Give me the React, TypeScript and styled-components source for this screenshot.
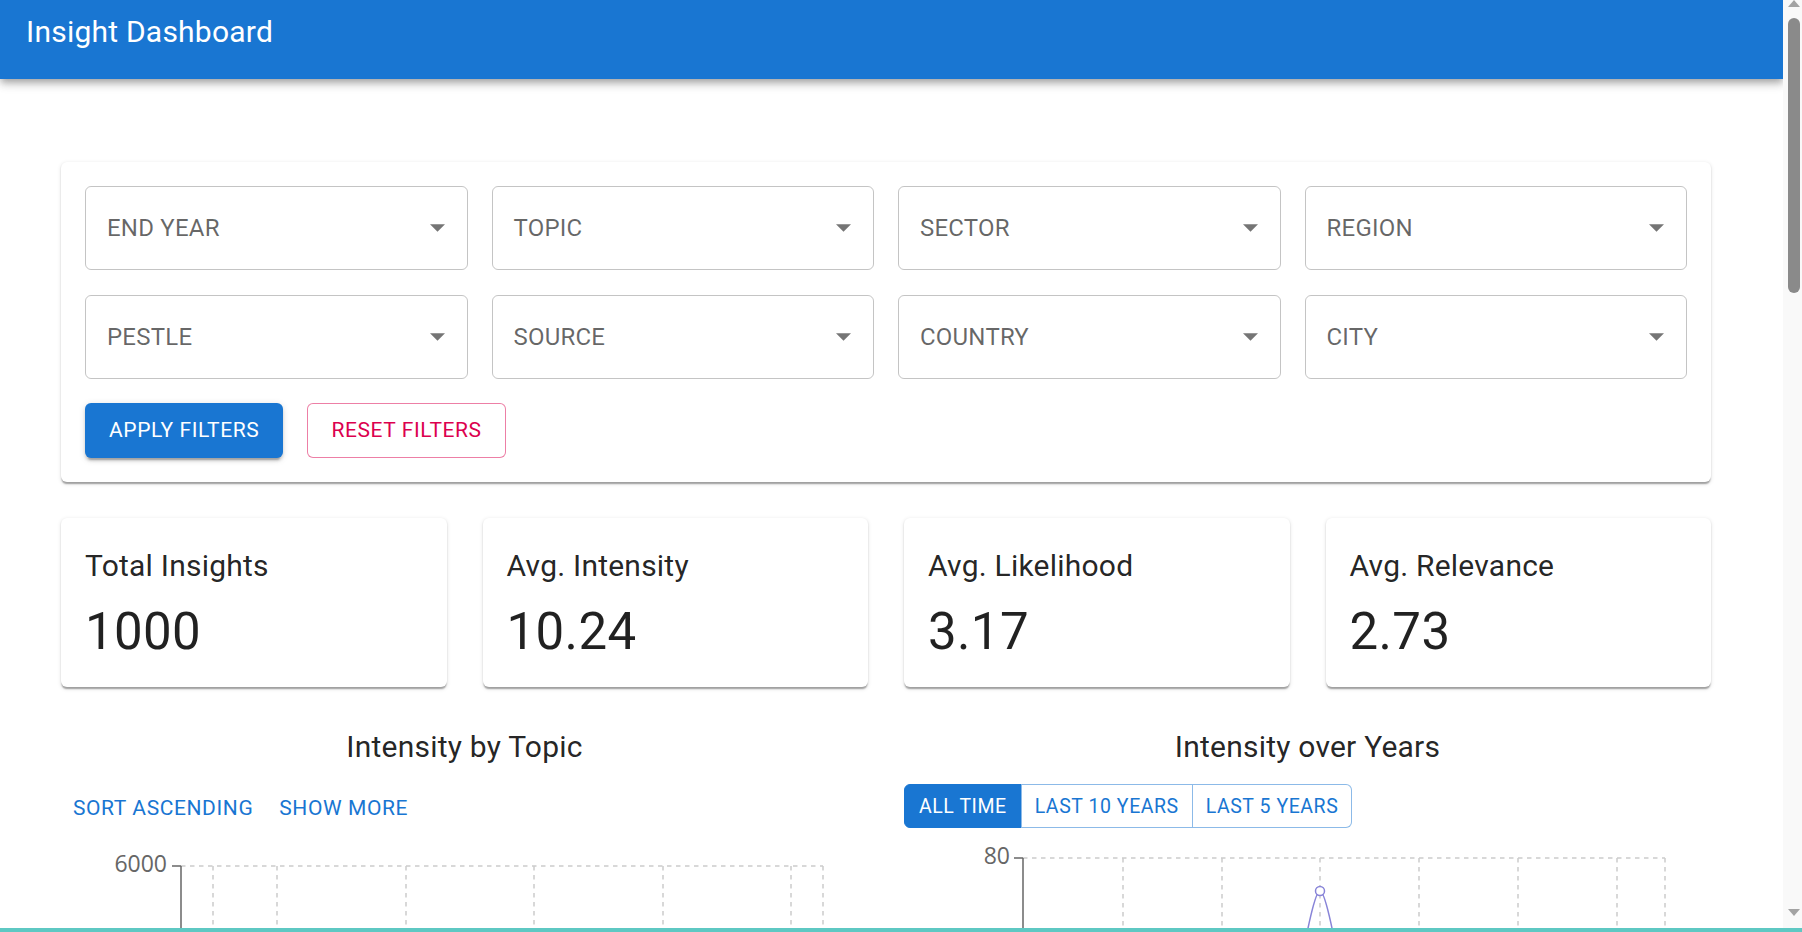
import React from "react";
import styled, { createGlobalStyle } from "styled-components";

const GlobalStyle = createGlobalStyle`
  html, body {
    margin: 0;
    padding: 0;
    height: 100%;
    overflow: hidden;
  }
  body {
    font-family: Roboto, "Liberation Sans", Arial, sans-serif;
    color: rgba(0, 0, 0, 0.87);
    background: #fff;
  }
  #root {
    height: 100%;
  }
  * {
    box-sizing: border-box;
  }
`;

const filters = [
  "END YEAR",
  "TOPIC",
  "SECTOR",
  "REGION",
  "PESTLE",
  "SOURCE",
  "COUNTRY",
  "CITY",
];

const stats = [
  { label: "Total Insights", value: "1000" },
  { label: "Avg. Intensity", value: "10.24" },
  { label: "Avg. Likelihood", value: "3.17" },
  { label: "Avg. Relevance", value: "2.73" },
];

const topicBars = [2100, 1650, 1320, 980, 760, 540, 410];
const ranges = ["ALL TIME", "LAST 10 YEARS", "LAST 5 YEARS"];

const ArrowDown = () => (
  <svg width="15" height="8" viewBox="0 0 10 5">
    <path d="M0 0l5 5 5-5z" fill="rgba(0,0,0,0.54)" />
  </svg>
);

const TopicChart = () => {
  const vLines = [152, 216, 345, 473, 602, 730, 762];
  const hLines = [30, 130, 230, 330, 430];
  const labels = ["6000", "4500", "3000", "1500", "0"];
  return (
    <ChartSvg viewBox="0 0 807 520" height={520}>
      {hLines.map((y) => (
        <GridLine key={y} x1={120} x2={762} y1={y} y2={y} />
      ))}
      {vLines.map((x) => (
        <GridLine key={x} x1={x} x2={x} y1={30} y2={430} />
      ))}
      {topicBars.map((v, i) => {
        const h = (v / 6000) * 400;
        const x = 130 + i * 90;
        return <rect key={i} x={x} y={430 - h} width={60} height={h} fill="#8884d8" />;
      })}
      <AxisLine x1={120} x2={120} y1={30} y2={430} />
      <AxisLine x1={120} x2={762} y1={430} y2={430} />
      {hLines.map((y, i) => (
        <g key={y}>
          <AxisLine x1={111} x2={120} y1={y} y2={y} />
          <TickText x={106} y={y} textAnchor="end" dominantBaseline="middle">
            {labels[i]}
          </TickText>
        </g>
      ))}
    </ChartSvg>
  );
};

const YearChart = () => {
  const vLines = [219, 318, 416, 515, 614, 713, 761];
  const hLines = [30, 130, 230, 330, 430];
  const labels = ["80", "60", "40", "20", "0"];
  return (
    <ChartSvg viewBox="0 0 807 520" height={520}>
      {hLines.map((y) => (
        <GridLine key={y} x1={119} x2={761} y1={y} y2={y} />
      ))}
      {vLines.map((x) => (
        <GridLine key={x} x1={x} x2={x} y1={30} y2={430} />
      ))}
      <path
        d="M119 380 C 180 380, 250 360, 318 372 C 350 378, 372 340, 380 320 L 390 170 C 400 120, 410 63, 416 63 C 422 63, 432 120, 442 170 L 452 320 C 480 340, 560 390, 614 385 C 660 380, 720 405, 761 400"
        fill="none"
        stroke="#8884d8"
        strokeWidth={1.5}
      />
      <circle cx={416} cy={63} r={4.5} fill="#fff" stroke="#8884d8" strokeWidth={1.5} />
      <AxisLine x1={119} x2={119} y1={30} y2={430} />
      <AxisLine x1={119} x2={761} y1={430} y2={430} />
      {hLines.map((y, i) => (
        <g key={y}>
          <AxisLine x1={110} x2={119} y1={y} y2={y} />
          <TickText x={106} y={y} textAnchor="end" dominantBaseline="middle">
            {labels[i]}
          </TickText>
        </g>
      ))}
    </ChartSvg>
  );
};

const App = () => {
  return (
    <Frame>
      <GlobalStyle />
      <Window>
        <Page>
          <AppBar>
            <AppTitle>Insight Dashboard</AppTitle>
          </AppBar>
          <Main>
            <Paper $pad={24} $mb={36}>
              <FilterGrid>
                {filters.map((f) => (
                  <SelectBox key={f}>
                    <span>{f}</span>
                    <ArrowDown />
                  </SelectBox>
                ))}
              </FilterGrid>
              <ButtonRow>
                <Button $variant="contained">Apply Filters</Button>
                <Button $variant="outlined">Reset Filters</Button>
              </ButtonRow>
            </Paper>

            <StatGrid>
              {stats.map((s) => (
                <Paper key={s.label} $pad={24}>
                  <StatLabel>{s.label}</StatLabel>
                  <StatValue>{s.value}</StatValue>
                </Paper>
              ))}
            </StatGrid>

            <ChartGrid>
              <ChartPanel>
                <ChartTitle>Intensity by Topic</ChartTitle>
                <Controls $height={55}>
                  <Button $variant="text">Sort Ascending</Button>
                  <Button $variant="text">Show More</Button>
                </Controls>
                <TopicChart />
              </ChartPanel>
              <ChartPanel>
                <ChartTitle>Intensity over Years</ChartTitle>
                <Controls $height={47} $top={3}>
                  <ToggleGroup>
                    {ranges.map((r, i) => (
                      <ToggleButton key={r} $active={i === 0}>
                        {r}
                      </ToggleButton>
                    ))}
                  </ToggleGroup>
                </Controls>
                <YearChart />
              </ChartPanel>
            </ChartGrid>
          </Main>
        </Page>
        <ScrollRail>
          <RailArrow viewBox="0 0 12 7">
            <path d="M0 7L6 0l6 7z" fill="#a3a3a3" />
          </RailArrow>
          <RailThumb />
          <RailSpacer />
          <RailArrow viewBox="0 0 12 7">
            <path d="M0 0l6 7 6-7z" fill="#a3a3a3" />
          </RailArrow>
        </ScrollRail>
      </Window>
      <BottomEdge />
    </Frame>
  );
};

const Frame = styled.div`
  display: flex;
  flex-direction: column;
  height: 100vh;
`;

const Window = styled.div`
  flex: 1;
  display: flex;
  min-height: 0;
`;

const Page = styled.div`
  flex: 1;
  min-width: 0;
  overflow: hidden;
  background: #fff;
`;

const AppBar = styled.header`
  position: relative;
  z-index: 1;
  height: 79px;
  padding: 8px 26px 0;
  background: #1976d2;
  color: #fff;
  box-shadow: 0 3px 6px -1.5px rgba(0, 0, 0, 0.2), 0 6px 7.5px 0 rgba(0, 0, 0, 0.14),
    0 1.5px 15px 0 rgba(0, 0, 0, 0.12);
`;

const AppTitle = styled.h1`
  margin: 0;
  font-size: 30px;
  font-weight: 400;
  line-height: 48px;
  letter-spacing: 0.0075em;
`;

const Main = styled.main`
  padding: 83px 72px 120px 61px;
`;

const Paper = styled.div<{ $pad: number; $mb?: number }>`
  background: #fff;
  border-radius: 6px;
  padding: ${(p) => p.$pad}px;
  margin-bottom: ${(p) => p.$mb || 0}px;
  box-shadow: 0 3px 1.5px -1.5px rgba(0, 0, 0, 0.2), 0 1.5px 1.5px 0 rgba(0, 0, 0, 0.14),
    0 1.5px 4.5px 0 rgba(0, 0, 0, 0.12);
`;

const FilterGrid = styled.div`
  display: grid;
  grid-template-columns: repeat(4, 1fr);
  column-gap: 24px;
  row-gap: 25px;
`;

const SelectBox = styled.div`
  height: 84px;
  display: flex;
  align-items: center;
  justify-content: space-between;
  padding: 0 22px 0 21px;
  border: 1px solid rgba(0, 0, 0, 0.23);
  border-radius: 6px;
  font-size: 24px;
  letter-spacing: 0.00938em;
  color: rgba(0, 0, 0, 0.6);
`;

const ButtonRow = styled.div`
  display: flex;
  gap: 24px;
  margin-top: 24px;
`;

const Button = styled.button<{ $variant: "contained" | "outlined" | "text" }>`
  font-family: Roboto, "Liberation Sans", Arial, sans-serif;
  font-size: 21px;
  font-weight: 400;
  line-height: 36.75px;
  letter-spacing: 0.6px;
  text-transform: uppercase;
  border-radius: 6px;
  cursor: pointer;
  ${(p) =>
    p.$variant === "contained"
      ? `
    padding: 9px 24px;
    border: none;
    background: #1976d2;
    color: #fff;
    box-shadow: 0 4.5px 1.5px -3px rgba(0,0,0,0.2), 0 3px 3px 0 rgba(0,0,0,0.14), 0 1.5px 7.5px 0 rgba(0,0,0,0.12);
  `
      : p.$variant === "outlined"
      ? `
    padding: 8px 23px;
    border: 1px solid rgba(220, 0, 78, 0.5);
    background: #fff;
    color: #dc004e;
  `
      : `
    padding: 9px 12px;
    border: none;
    background: transparent;
    color: #1976d2;
  `}
`;

const StatGrid = styled.div`
  display: grid;
  grid-template-columns: repeat(4, 1fr);
  gap: 36px;
  margin-bottom: 36px;
`;

const StatLabel = styled.div`
  font-size: 30px;
  font-weight: 400;
  line-height: 48px;
  letter-spacing: 0.0075em;
  margin-bottom: 10.5px;
`;

const StatValue = styled.div`
  font-size: 51px;
  font-weight: 400;
  line-height: 63px;
  letter-spacing: 0.00735em;
`;

const ChartGrid = styled.div`
  display: grid;
  grid-template-columns: repeat(2, 1fr);
  gap: 36px;
`;

const ChartPanel = styled.section`
  display: flex;
  flex-direction: column;
  min-width: 0;
`;

const ChartTitle = styled.h2`
  margin: 0 0 10px;
  text-align: center;
  font-size: 30px;
  font-weight: 400;
  line-height: 48px;
  letter-spacing: 0.0075em;
`;

const Controls = styled.div<{ $height: number; $top?: number }>`
  display: flex;
  align-items: flex-start;
  gap: 2px;
  height: ${(p) => p.$height}px;
  padding-top: ${(p) => p.$top || 0}px;
`;

const ToggleGroup = styled.div`
  display: inline-flex;
  border-radius: 6px;
`;

const ToggleButton = styled.button<{ $active: boolean }>`
  height: 44px;
  padding: 0 13px;
  font-family: Roboto, "Liberation Sans", Arial, sans-serif;
  font-size: 19.5px;
  font-weight: 400;
  letter-spacing: 0.55px;
  text-transform: uppercase;
  cursor: pointer;
  border: 1px solid ${(p) => (p.$active ? "#1976d2" : "rgba(25, 118, 210, 0.5)")};
  background: ${(p) => (p.$active ? "#1976d2" : "#fff")};
  color: ${(p) => (p.$active ? "#fff" : "#1976d2")};
  & + & {
    margin-left: -1px;
  }
  &:first-child {
    border-radius: 6px 0 0 6px;
    padding: 0 14px;
  }
  &:last-child {
    border-radius: 0 6px 6px 0;
  }
`;

const ChartSvg = styled.svg`
  display: block;
  width: 100%;
  overflow: visible;
`;

const GridLine = styled.line`
  stroke: #ccc;
  stroke-width: 1.5;
  stroke-dasharray: 4.5 4.5;
`;

const AxisLine = styled.line`
  stroke: #666;
  stroke-width: 1.5;
`;

const TickText = styled.text`
  font-family: "Open Sans", "Noto Sans", sans-serif;
  font-size: 23px;
  fill: #666;
`;

const ScrollRail = styled.div`
  width: 19px;
  flex-shrink: 0;
  display: flex;
  flex-direction: column;
  padding: 0 2px 12px 5px;
  background: #f9f9f9;
`;

const RailArrow = styled.svg`
  width: 12px;
  height: 7px;
  display: block;
`;

const RailThumb = styled.div`
  margin-top: 11px;
  width: 12px;
  height: 275px;
  border-radius: 6px;
  background: #8a8a8a;
`;

const RailSpacer = styled.div`
  flex: 1;
`;

const BottomEdge = styled.div`
  height: 4px;
  flex-shrink: 0;
  background: #5ec8c3;
`;

export default App;
